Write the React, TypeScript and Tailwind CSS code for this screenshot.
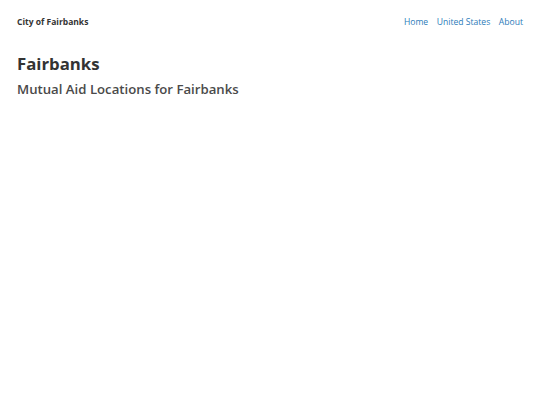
export default function App() {
  return (
    <div className="min-h-screen bg-white px-[17px] font-['Open_Sans',sans-serif]">
      <header className="flex items-center justify-between h-[45px]">
        <a className="text-[8.5px] font-bold text-[#333]">City of Fairbanks</a>
        <nav className="flex gap-[8.5px] text-[8.6px] text-[#2b7bb9]">
          <a>Home</a>
          <a>United States</a>
          <a>About</a>
        </nav>
      </header>
      <main className="pt-[7px]">
        <h1 className="text-[16.8px] font-bold text-[#333] leading-[24px]">Fairbanks</h1>
        <h2 className="text-[13.2px] font-semibold text-[#4a4a4a] leading-[20px] mt-[3px]">Mutual Aid Locations for Fairbanks</h2>
      </main>
    </div>
  );
}
